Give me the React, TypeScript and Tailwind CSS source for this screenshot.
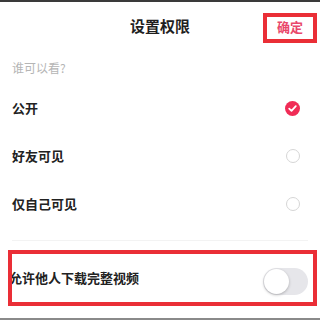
import React from "react";

const options = [
  { label: "公开", checked: true },
  { label: "好友可见", checked: false },
  { label: "仅自己可见", checked: false },
];

function Radio({ checked }: { checked: boolean }) {
  if (checked) {
    return (
      <svg width="15" height="15" viewBox="0 0 15 15">
        <circle cx="7.5" cy="7.5" r="7.5" fill="#f02c56" />
        <path d="M4.2 7.7 L6.5 9.9 L10.8 5.2" fill="none" stroke="#fff" strokeWidth="1.8" strokeLinecap="round" strokeLinejoin="round" />
      </svg>
    );
  }
  return <div className="w-[14px] h-[14px] rounded-full border border-[#d6d6d6]" />;
}

export default function App() {
  return (
    <div
      className="relative w-[320px] h-[320px] bg-white overflow-hidden flex flex-col"
      style={{ fontFamily: '"Noto Sans CJK SC", "Noto Sans", sans-serif' }}
    >
      <div className="h-[2px] bg-[#3a3a3a]" />

      {/* header */}
      <div className="h-[48px] flex items-center">
        <div className="w-[60px]" />
        <h1 className="flex-1 text-center text-[15px] font-bold text-[#1f1f1f]">设置权限</h1>
        <div className="w-[60px] flex justify-center">
          <button className="text-[13px] font-bold text-[#e9486b] leading-none">确定</button>
        </div>
      </div>

      <p className="mt-[10px] px-3 text-[12px] leading-[16px] text-[#b5b5b5]">谁可以看?</p>

      <ul className="mt-[8px]">
        {options.map((opt) => (
          <li key={opt.label} className="h-[48px] flex items-center justify-between pl-3 pr-[20px]">
            <span className="text-[13px] font-bold text-[#222]">{opt.label}</span>
            <Radio checked={opt.checked} />
          </li>
        ))}
      </ul>

      <div className="mt-[12px] mx-3 h-px bg-[#f3f3f3]" />

      <div className="mt-[12px] h-[56px] flex items-center justify-between pl-[9px] pr-[12px]">
        <span className="text-[13px] font-bold text-[#222] -mt-[6px]">允许他人下载完整视频</span>
        <div className="w-[45px] h-[27px] rounded-full bg-[#e6e6ea] p-[1px] flex items-center">
          <div className="w-[25px] h-[25px] rounded-full bg-white shadow-[0_1px_3px_rgba(0,0,0,0.25)]" />
        </div>
      </div>

      <div className="flex-1" />
      <div className="h-[2px] bg-[#8a8a8a]" />

      {/* annotation boxes */}
      <div className="absolute left-[263px] top-[13px] w-[54px] h-[30px] border-4 border-[#ea2e36]" />
      <div className="absolute left-[8px] top-[250px] w-[309px] h-[56px] border-4 border-[#ea2e36]" />
    </div>
  );
}
